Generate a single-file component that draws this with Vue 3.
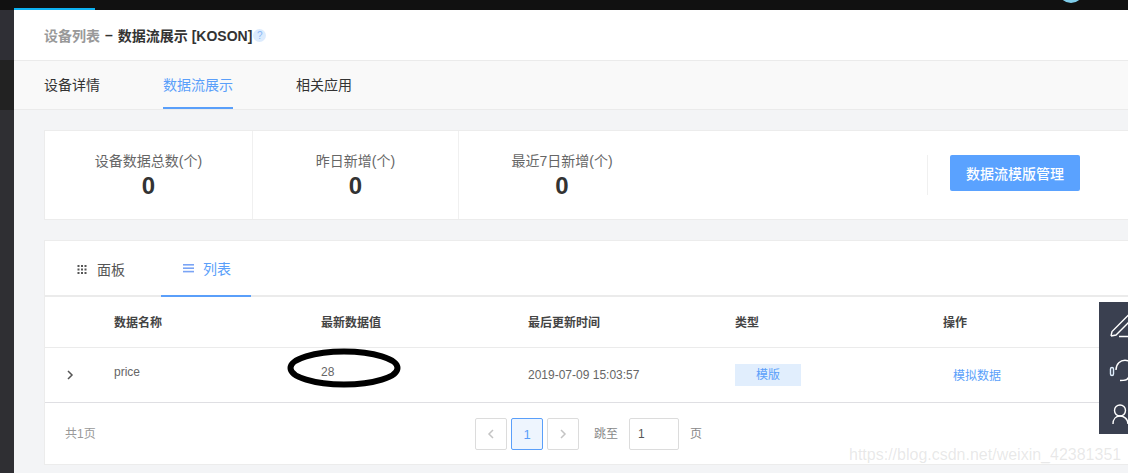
<script setup>
const stats = [
  { label: '设备数据总数(个)', value: '0' },
  { label: '昨日新增(个)', value: '0' },
  { label: '最近7日新增(个)', value: '0' },
]
const columns = ['数据名称', '最新数据值', '最后更新时间', '类型', '操作']
</script>

<template>
  <div class="page">
    <div class="topbar">
      <span class="top-progress"></span>
      <span class="avatar"></span>
    </div>
    <div class="shell">
      <aside class="side"></aside>
      <main class="main">
        <header class="crumb">
          <span class="crumb-link">设备列表</span>
          <span class="crumb-dash">–</span>
          <span>数据流展示 [KOSON]</span>
          <span class="help">?</span>
        </header>
        <nav class="nav">
          <span class="nav-item">设备详情</span>
          <span class="nav-item active">数据流展示</span>
          <span class="nav-item">相关应用</span>
        </nav>
        <div class="content">
          <section class="stats">
            <div v-for="s in stats" :key="s.label" class="stat">
              <div class="stat-label">{{ s.label }}</div>
              <div class="stat-value">{{ s.value }}</div>
            </div>
            <div class="stat-action">
              <button class="primary">数据流模版管理</button>
            </div>
          </section>
          <section class="panel">
            <div class="view-tabs">
              <span class="view-tab">
                <svg width="10" height="9" viewBox="0 0 10 9" fill="#555">
                  <rect x="0.5" y="0" width="2" height="2" /><rect x="4" y="0" width="2" height="2" /><rect x="7.500" y="0" width="2" height="2" />
                  <rect x="0.5" y="3.500" width="2" height="2" /><rect x="4" y="3.500" width="2" height="2" /><rect x="7.500" y="3.500" width="2" height="2" />
                  <rect x="0.5" y="7" width="2" height="2" /><rect x="4" y="7" width="2" height="2" /><rect x="7.500" y="7" width="2" height="2" />
                </svg>
                面板
              </span>
              <span class="view-tab on">
                <svg width="11" height="9" viewBox="0 0 11 9" fill="#7aa4f5">
                  <rect x="0" y="0" width="11" height="1.600" /><rect x="0" y="3.400" width="11" height="1.600" /><rect x="0" y="6.800" width="11" height="1.600" />
                </svg>
                列表
              </span>
            </div>
            <div class="thead row-grid">
              <span v-for="c in columns" :key="c">{{ c }}</span>
            </div>
            <div class="tbody row-grid">
              <span class="cell-name">price</span>
              <span class="cell-value">
                28
                <svg class="ring" width="116" height="42" viewBox="0 0 116 42">
                  <ellipse cx="58" cy="21" rx="53.500" ry="16.500" fill="none" stroke="#000" stroke-width="6" />
                </svg>
              </span>
              <span>2019-07-09 15:03:57</span>
              <span><span class="tag">模版</span></span>
              <span class="link">模拟数据</span>
              <svg class="chev" width="8" height="10" viewBox="0 0 8 10" fill="none" stroke="#555" stroke-width="1.500">
                <path d="M2 1 6 5 2 9" />
              </svg>
            </div>
            <div class="pager">
              <span class="total">共1页</span>
              <div class="pager-center">
                <span class="pg">
                  <svg width="8" height="12" viewBox="0 0 8 12" fill="none" stroke="#c4c4c4" stroke-width="1.500"><path d="M6 2 2 6l4 4" /></svg>
                </span>
                <span class="pg cur">1</span>
                <span class="pg">
                  <svg width="8" height="12" viewBox="0 0 8 12" fill="none" stroke="#c4c4c4" stroke-width="1.500"><path d="M2 2l4 4-4 4" /></svg>
                </span>
                <span class="jump">跳至</span>
                <span class="jump-input">1</span>
                <span class="jump-end">页</span>
              </div>
            </div>
          </section>
        </div>
      </main>
    </div>
    <div class="float">
      <svg width="29" height="44" viewBox="0 0 29 44" fill="none" stroke="#fff" stroke-width="1.400">
        <path d="M12 34 13 29.500 30 12.500M12 34l5-1L30 20M20 34.500h9" />
      </svg>
      <svg width="29" height="44" viewBox="0 0 29 44" fill="none" stroke="#fff" stroke-width="1.400">
        <path d="M17 24c0-13 18-13 18 0M21 34.500c4 0 8 0 8-3" />
        <rect x="11.500" y="21.500" width="3" height="8" rx="1.500" stroke="#dfeefc" />
      </svg>
      <svg width="29" height="44" viewBox="0 0 29 44" fill="none" stroke="#fff" stroke-width="1.400">
        <circle cx="21" cy="20.500" r="5.500" />
        <path d="M14 34c0-5 3-8 7-8s8 3 8 8" />
      </svg>
    </div>
    <div class="watermark">https://blog.csdn.net/weixin_42381351</div>
  </div>
</template>

<style>
html, body { margin: 0; overflow: hidden; }
</style>

<style scoped>
.page {
  width: 1128px;
  height: 473px;
  overflow: hidden;
  position: relative;
  background: #f3f4f6;
  font-family: "Liberation Sans", "Noto Sans CJK SC", sans-serif;
  color: #333;
  display: flex;
  flex-direction: column;
}
.topbar { height: 10px; flex: none; background: #111; position: relative; }
.top-progress { position: absolute; left: 14px; top: 8px; width: 81px; height: 2px; background: #0db2f2; }
.avatar { position: absolute; left: 1058px; top: -24px; width: 26px; height: 27px; border-radius: 50%; background: #7fcdea; }
.shell { flex: 1; display: flex; min-height: 0; }
.side {
  width: 14px;
  flex: none;
  background: linear-gradient(#2f2f35 0 50px, #222 50px 100px, #2f2f33 100px);
}
.main { flex: 1; min-width: 0; display: flex; flex-direction: column; }
.crumb {
  height: 50px;
  flex: none;
  box-sizing: border-box;
  padding-left: 30px;
  background: #fff;
  display: flex;
  align-items: center;
  gap: 5px;
  font-size: 14px;
  font-weight: 700;
  color: #333;
}
.crumb-link { color: #999; }
.help {
  width: 13px; height: 13px; border-radius: 50%;
  background: #dcebfd; color: #8ab8f5;
  font-size: 10px; line-height: 13px; text-align: center; font-weight: 400;
  margin-left: -4px;
}
.nav {
  height: 50px;
  flex: none;
  box-sizing: border-box;
  background: #f9f9f9;
  border-top: 1px solid #ebebeb;
  border-bottom: 1px solid #ebebeb;
  padding-left: 30px;
  display: flex;
  gap: 63px;
  font-size: 14px;
}
.nav-item { line-height: 48px; height: 48px; box-sizing: border-box; }
.nav-item.active { color: #5a9ffa; border-bottom: 2px solid #5a9ffa; }
.content { flex: 1; padding: 20px 0 0 30px; display: flex; flex-direction: column; gap: 20px; }
.stats {
  height: 90px;
  box-sizing: border-box;
  background: #fff;
  border: 1px solid #ececec;
  border-right: 0;
  display: flex;
  align-items: center;
}
.stat {
  width: 206px;
  height: 100%;
  flex: none;
  box-sizing: border-box;
  border-right: 1px solid #f0f0f0;
  text-align: center;
  padding-top: 21px;
}
.stat:first-child { width: 208px; }
.stat:nth-child(3) { border-right: 0; }
.stat-label { font-size: 14px; line-height: 18px; color: #666; }
.stat-value { font-size: 24px; line-height: 28px; margin-top: 2px; font-weight: 700; color: #333; }
.stat-action {
  margin-left: 262px;
  height: 40px;
  border-left: 1px solid #f0f0f0;
  padding-left: 22px;
  display: flex;
  align-items: flex-start;
}
.primary {
  width: 130px; height: 36px;
  padding: 0;
  border: 0; border-radius: 2px;
  background: #5aa2ff; color: #fff;
  font: 500 14px "Liberation Sans", "Noto Sans CJK SC", sans-serif;
}
.panel {
  height: 225px;
  box-sizing: border-box;
  background: #fff;
  border: 1px solid #ececec;
  border-right: 0;
  display: flex;
  flex-direction: column;
}
.view-tabs {
  height: 56px;
  flex: none;
  box-sizing: border-box;
  border-bottom: 2px solid #ebebeb;
  display: flex;
}
.view-tab {
  width: 116px;
  height: 56px;
  box-sizing: border-box;
  display: flex;
  align-items: center;
  gap: 10px;
  padding-left: 32px;
  font-size: 14px;
  color: #555;
}
.view-tab.on { color: #5a9ffa; border-bottom: 2px solid #5a9ffa; width: 90px; padding-left: 22px; gap: 9px; }
.row-grid {
  display: grid;
  grid-template-columns: 207px 207px 207px 208px 1fr;
  padding-left: 69px;
  align-items: center;
  position: relative;
}
.thead {
  height: 51px;
  flex: none;
  padding-bottom: 1px;
  box-sizing: border-box;
  border-bottom: 1px solid #ebebeb;
  font-size: 12px;
  font-weight: 700;
  color: #444;
}
.tbody {
  height: 55px;
  flex: none;
  box-sizing: border-box;
  border-bottom: 1px solid #dfdfe3;
  font-size: 12px;
  color: #666;
}
.cell-name, .cell-value { padding-bottom: 6px; }
.cell-value { position: relative; }
.ring { position: absolute; left: -35px; top: -18px; }
.tag {
  display: inline-block;
  width: 66px; height: 22px; line-height: 23px;
  background: #e1eefd; color: #5a9ffa; text-align: center;
}
.link { color: #5a9ffa; padding-left: 10px; padding-bottom: 2px; }
.chev { position: absolute; left: 21px; top: 22px; }
.pager { flex: 1; position: relative; display: flex; align-items: center; padding-left: 20px; padding-bottom: 3px; font-size: 12px; color: #999; }
.pager-center {
  position: absolute; left: 430px; top: 15px;
  display: flex; align-items: center;
}
.pg {
  width: 32px; height: 32px; box-sizing: border-box;
  border: 1px solid #dcdcdc; border-radius: 2px;
  display: flex; align-items: center; justify-content: center;
  margin-right: 4px;
}
.pg.cur { background: #eef5fe; border-color: #5a9ffa; color: #5a9ffa; font-size: 13px; }
.jump { margin-left: 11px; font-size: 12px; color: #888; padding-bottom: 3px; }
.jump-input {
  width: 50px; height: 32px; box-sizing: border-box;
  border: 1px solid #dcdcdc; border-radius: 2px;
  margin-left: 11px; padding-left: 8px;
  line-height: 30px; color: #555; font-size: 12px;
}
.jump-end { margin-left: 11px; color: #888; padding-bottom: 3px; }
.float {
  position: absolute; left: 1099px; top: 302px;
  width: 29px; height: 132px;
  background: #3a4050;
  display: flex; flex-direction: column;
}
.watermark {
  position: absolute; left: 849px; top: 446px;
  font-size: 16px; color: rgba(150, 150, 150, 0.22);
  white-space: nowrap;
}
</style>
